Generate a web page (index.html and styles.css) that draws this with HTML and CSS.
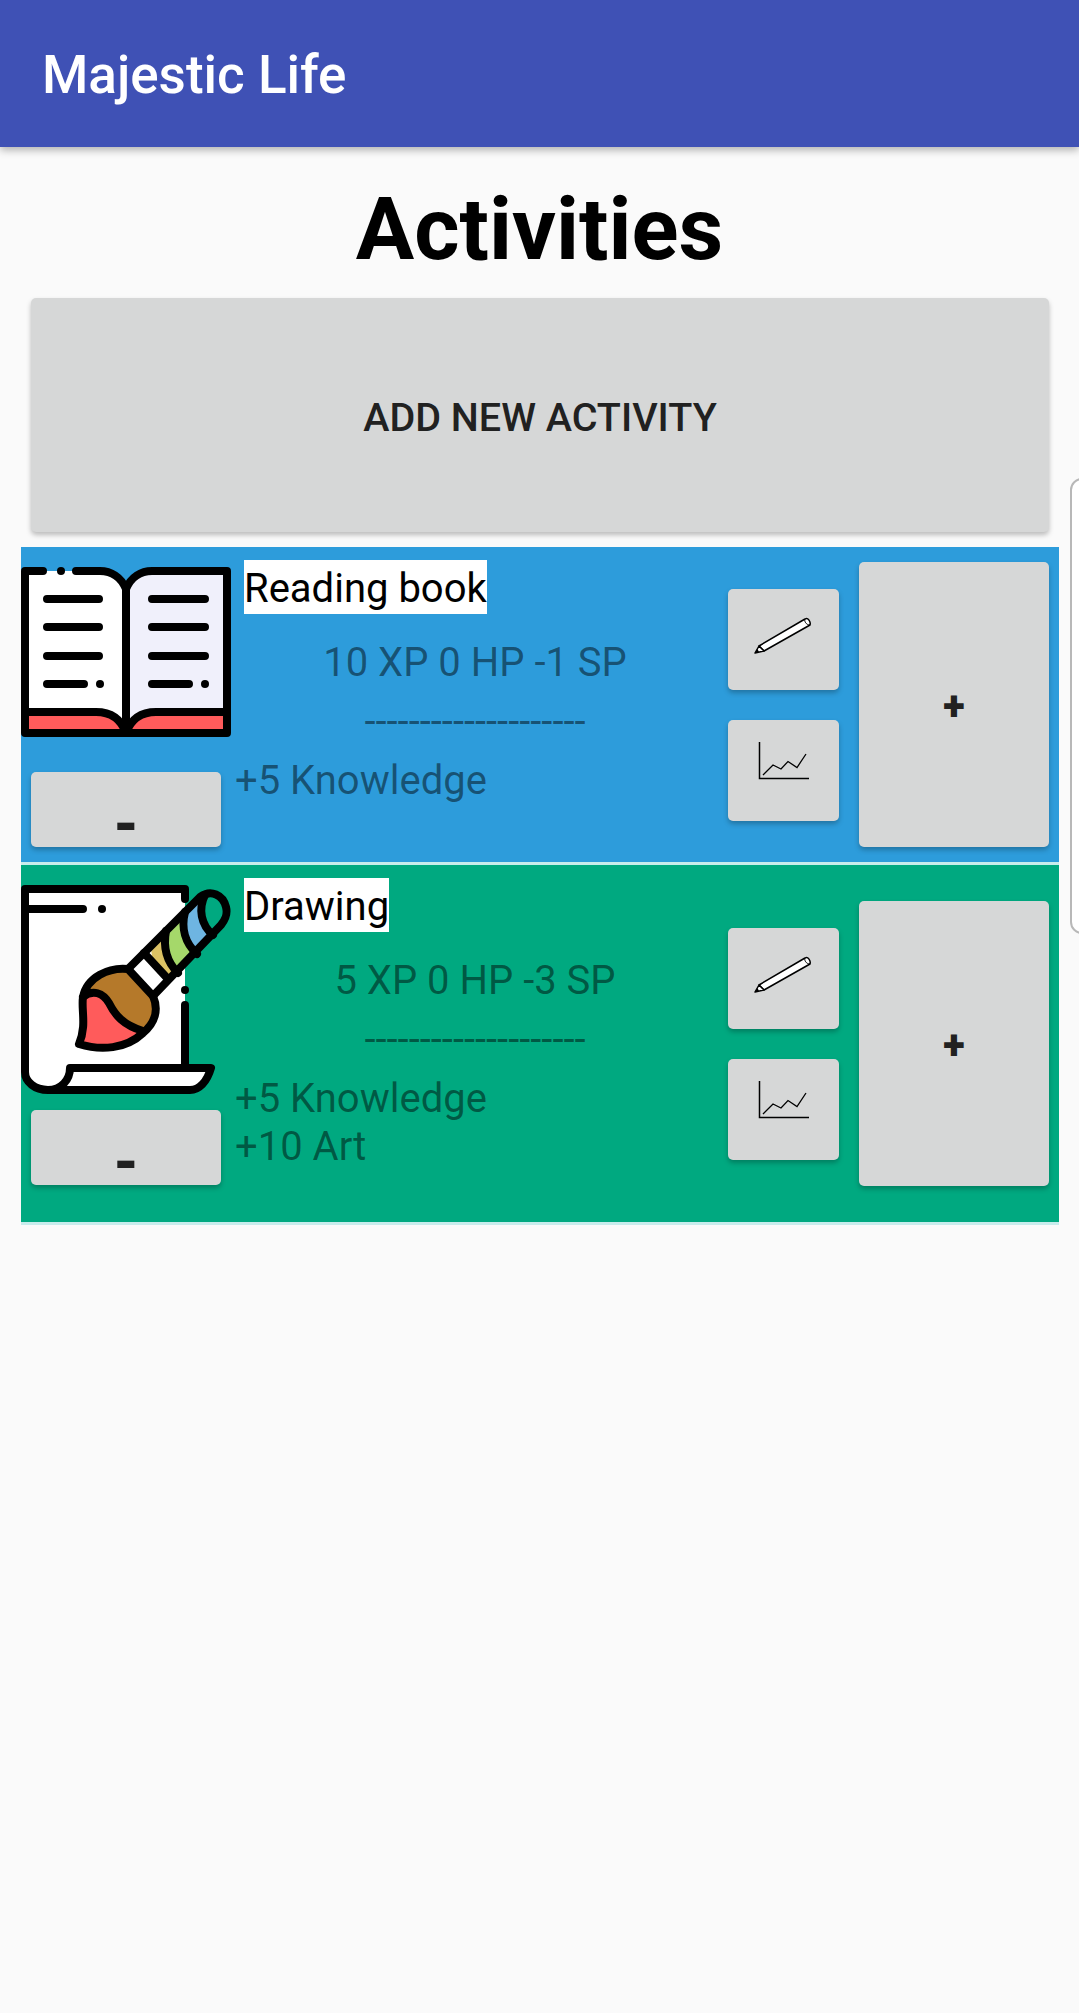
FILE: index.html
```html
<!DOCTYPE html>
<html lang="en">
  <head>
    <meta charset="UTF-8" />
    <meta name="viewport" content="width=device-width, initial-scale=1.0" />
    <title>Majestic Life</title>
    <link rel="stylesheet" href="styles.css">
  </head>
  <body>
    <header class="app-bar">Majestic Life</header>
    <h1 class="page-title">Activities</h1>
    <button class="btn add-btn">ADD NEW ACTIVITY</button>

    <div class="activity activity-blue">
      <div class="left-col">
        <svg class="activity-icon book-icon" viewBox="0 0 210 170">
          <path d="M4 4H79C90 4 100 10 105 18V160C100 150 90 145 75 145H4Z" fill="#fff"/>
          <path d="M206 4H131C120 4 110 10 105 18V160C110 150 120 145 135 145H206Z" fill="#f0f0fb"/>
          <path d="M4 145H75C90 145 100 152 105 166H4ZM206 145H135C120 145 110 152 105 166H206Z" fill="#ff5b5b"/>
          <g fill="none" stroke="#000" stroke-width="8" stroke-linecap="round" stroke-linejoin="round">
            <path d="M4 4H22M55 4H79C90 4 100 10 105 22C110 10 120 4 131 4H206V166H4V145H75C90 145 100 152 105 166C110 152 120 145 135 145H206M4 4V145M105 22V166"/>
            <path d="M26 32H78M26 60H78M26 89H78M26 117H63M131 32H184M131 60H184M131 89H184M131 117H168"/>
          </g>
          <circle cx="40" cy="4" r="4"/>
          <circle cx="79" cy="117" r="4"/>
          <circle cx="184" cy="117" r="4"/>
        </svg>
        <button class="btn minus-btn minus-gap-wide">-</button>
      </div>
      <div class="middle-col">
        <span class="activity-name">Reading book</span>
        <p class="stats">10 XP 0 HP -1 SP</p>
        <p class="divider">--------------------</p>
        <p class="attributes">+5 Knowledge</p>
      </div>
      <div class="right-col">
        <div class="small-btns">
          <button class="btn icon-btn">
            <svg class="btn-icon" viewBox="0 0 66 66">
              <path d="M8 40L54 13C57 11 60 16 59 19L13 45Z" fill="#fff" stroke="#000" stroke-width="1.5" stroke-linejoin="round"/>
              <path d="M8 40L4 47L13 45Z" fill="#fff" stroke="#000" stroke-width="1.5" stroke-linejoin="round"/>
              <path d="M4 47L6.500 43L8 46Z"/>
              <path d="M54 13C53 15 55 19 59 19" fill="none" stroke="#000" stroke-width="1"/>
            </svg>
          </button>
          <button class="btn icon-btn">
            <svg class="btn-icon" viewBox="0 0 66 66">
              <path d="M8.500 5V41.500H58" fill="none" stroke="#000" stroke-width="1.500"/>
              <path d="M12 38L22 28L30 32L37 24.500L46 30.500L55 17" fill="none" stroke="#000" stroke-width="1.300"/>
            </svg>
          </button>
        </div>
        <button class="btn plus-btn">+</button>
      </div>
    </div>

    <div class="activity activity-green">
      <div class="left-col">
        <svg class="activity-icon brush-icon" viewBox="0 0 210 209">
          <path d="M4 4H164V182H190C186 197 178 205 169 205H27C14 205 4 197 4 187Z" fill="#fff"/>
          <g fill="none" stroke="#000" stroke-width="8" stroke-linecap="round" stroke-linejoin="round">
            <path d="M4 24H62M164 4V14M164 120V183M164 4H4V187C4 197 14 205 27 205H169C178 205 186 197 190 183H49C49 195 40 205 27 205"/>
          </g>
          <circle cx="81" cy="24" r="4"/>
          <circle cx="164" cy="105" r="4"/>
          <path d="M107 84L126 65L144 92L132 111Z" fill="#fff"/>
          <path d="M130 61L144 47C142 60 146 75 155 88L147 97C136 88 130 75 130 61Z" fill="#dcc264"/>
          <path d="M147 44L163 28C160 42 164 58 175 69L158 86C148 75 145 60 147 44Z" fill="#a5d86a"/>
          <path d="M165 26L181 12C177 26 182 41 193 50L177 67C166 57 162 41 165 26Z" fill="#6eb5e2"/>
          <path d="M107 84C88 82 66 92 62 112C60 125 66 140 58 159C80 166 105 164 122 148C134 138 138 125 132 111Z" fill="#b5792a"/>
          <path d="M62 112C72 104 82 108 88 118C94 130 102 140 122 146C105 164 80 166 58 159C66 140 60 125 62 112Z" fill="#ff5b5b"/>
          <g fill="none" stroke="#000" stroke-width="8" stroke-linecap="round" stroke-linejoin="round">
            <path d="M107 84C88 82 66 92 62 112C60 125 66 140 58 159C80 166 105 164 122 148C134 138 138 125 132 111Z"/>
            <path d="M62 112C72 104 82 108 88 118C94 130 102 140 122 146"/>
            <path d="M107 84L179 12C190 4 202 10 205 22C207 30 204 35 200 40L132 111"/>
            <path d="M123 68L147 94M145 46C142 62 146 77 157 88M164 27C160 43 164 58 176 69M184 10C177 24 180 40 192 50"/>
          </g>
        </svg>
        <button class="btn minus-btn">-</button>
      </div>
      <div class="middle-col">
        <span class="activity-name">Drawing</span>
        <p class="stats">5 XP 0 HP -3 SP</p>
        <p class="divider">--------------------</p>
        <p class="attributes">+5 Knowledge<br>+10 Art</p>
      </div>
      <div class="right-col">
        <div class="small-btns">
          <button class="btn icon-btn">
            <svg class="btn-icon" viewBox="0 0 66 66">
              <path d="M8 40L54 13C57 11 60 16 59 19L13 45Z" fill="#fff" stroke="#000" stroke-width="1.5" stroke-linejoin="round"/>
              <path d="M8 40L4 47L13 45Z" fill="#fff" stroke="#000" stroke-width="1.5" stroke-linejoin="round"/>
              <path d="M4 47L6.500 43L8 46Z"/>
              <path d="M54 13C53 15 55 19 59 19" fill="none" stroke="#000" stroke-width="1"/>
            </svg>
          </button>
          <button class="btn icon-btn">
            <svg class="btn-icon" viewBox="0 0 66 66">
              <path d="M8.500 5V41.500H58" fill="none" stroke="#000" stroke-width="1.500"/>
              <path d="M12 38L22 28L30 32L37 24.500L46 30.500L55 17" fill="none" stroke="#000" stroke-width="1.300"/>
            </svg>
          </button>
        </div>
        <button class="btn plus-btn">+</button>
      </div>
    </div>

    <div class="side-handle"></div>
  </body>
</html>
```

FILE: styles.css
```css
body {
  margin: 0;
  background: #fafafa;
  font-family: Roboto, sans-serif;
  height: 2013px;
  overflow: hidden;
  position: relative;
}

.app-bar {
  height: 147px;
  padding-left: 42px;
  background: #3f51b5;
  color: #fff;
  font-size: 53px;
  font-weight: 500;
  line-height: 150px;
  box-sizing: border-box;
  box-shadow: 0 3px 8px rgba(0, 0, 0, 0.3);
}

.page-title {
  margin: 0;
  height: 151px;
  text-align: center;
  color: #000;
  font-size: 87px;
  font-weight: 700;
  line-height: 164px;
}

.btn {
  display: block;
  padding: 0;
  border: none;
  border-radius: 5px;
  background: #d6d7d7;
  color: #212121;
  font-family: Roboto, sans-serif;
  font-weight: 500;
  box-shadow: 0 3px 5px rgba(0, 0, 0, 0.25);
}

.add-btn {
  width: 1018px;
  height: 234px;
  margin: 0 0 15px 31px;
  padding-top: 4px;
  font-size: 39.500px;
}

.activity {
  display: flex;
  margin: 0 20px 0 21px;
  border-bottom: 3px solid #c8ecec;
}

.activity-blue {
  height: 315px;
  background: #2d9cdb;
}

.activity-green {
  height: 357px;
  background: #00a980;
}

.left-col {
  width: 210px;
  flex-shrink: 0;
  padding-top: 20px;
}

.activity-icon {
  display: block;
  width: 210px;
}

.book-icon {
  height: 170px;
}

.brush-icon {
  height: 209px;
}

.minus-btn {
  width: 190px;
  height: 75px;
  margin: 16px 0 0 10px;
  padding-top: 30px;
  font-size: 58px;
  font-weight: 900;
  line-height: 41px;
}

.minus-gap-wide {
  margin-top: 35px;
}

.middle-col {
  width: 484px;
  margin-right: 2px;
  flex-shrink: 0;
  padding-left: 4px;
  box-sizing: border-box;
}

.activity-name {
  display: inline-block;
  margin: 13px 0 0 9px;
  padding-top: 4px;
  background: #fff;
  color: #000;
  font-size: 40px;
  line-height: 50px;
}

.stats,
.divider,
.attributes {
  margin: 0;
  color: rgba(0, 0, 0, 0.48);
  font-size: 40px;
  line-height: 48px;
}

.stats {
  margin-top: 25px;
  text-align: center;
}

.divider {
  margin-top: 11px;
  text-align: center;
}

.attributes {
  margin-top: 11px;
}

.right-col {
  display: flex;
  flex: 1;
  align-items: center;
  gap: 20px;
  padding-left: 11px;
}

.small-btns {
  display: flex;
  flex-direction: column;
  gap: 30px;
}

.icon-btn {
  display: flex;
  width: 111px;
  height: 101px;
  align-items: center;
  justify-content: center;
}

.btn-icon {
  width: 66px;
  height: 66px;
}

.plus-btn {
  width: 190px;
  height: 285px;
  padding-top: 4px;
  font-size: 40px;
  font-weight: 900;
}

.side-handle {
  position: absolute;
  top: 478px;
  left: 1070px;
  width: 20px;
  height: 452px;
  background: #fff;
  border: 2px solid #b8b8b8;
  border-radius: 12px;
}
```
